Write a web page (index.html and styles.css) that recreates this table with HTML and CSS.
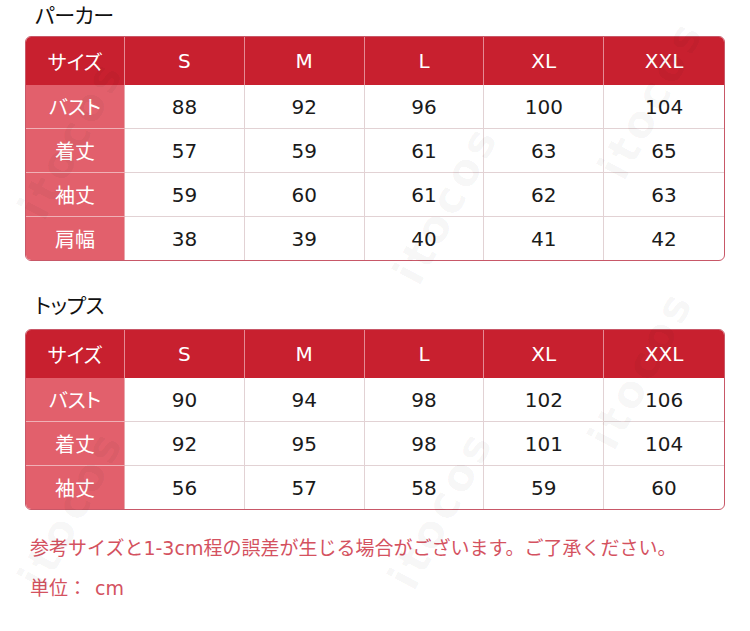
FILE: index.html
```html
<!DOCTYPE html>
<html lang="ja">
<head>
<meta charset="utf-8">
<link rel="stylesheet" href="styles.css">
</head>
<body>
<div class="page">
  <h2 class="title">パーカー</h2>
  <div class="table-wrap">
    <table class="size">
      <thead>
        <tr><th class="label">サイズ</th><th>S</th><th>M</th><th>L</th><th>XL</th><th>XXL</th></tr>
      </thead>
      <tbody>
        <tr><th class="label">バスト</th><td>88</td><td>92</td><td>96</td><td>100</td><td>104</td></tr>
        <tr><th class="label">着丈</th><td>57</td><td>59</td><td>61</td><td>63</td><td>65</td></tr>
        <tr><th class="label">袖丈</th><td>59</td><td>60</td><td>61</td><td>62</td><td>63</td></tr>
        <tr><th class="label">肩幅</th><td>38</td><td>39</td><td>40</td><td>41</td><td>42</td></tr>
      </tbody>
    </table>
  </div>

  <h2 class="title second">トップス</h2>
  <div class="table-wrap">
    <table class="size">
      <thead>
        <tr><th class="label">サイズ</th><th>S</th><th>M</th><th>L</th><th>XL</th><th>XXL</th></tr>
      </thead>
      <tbody>
        <tr><th class="label">バスト</th><td>90</td><td>94</td><td>98</td><td>102</td><td>106</td></tr>
        <tr><th class="label">着丈</th><td>92</td><td>95</td><td>98</td><td>101</td><td>104</td></tr>
        <tr><th class="label">袖丈</th><td>56</td><td>57</td><td>58</td><td>59</td><td>60</td></tr>
      </tbody>
    </table>
  </div>

  <p class="note">参考サイズと1-3cm程の誤差が生じる場合がございます。ご了承ください。</p>
  <p class="note unit">単位：<span class="unit-cm">cm</span></p>

  <div class="wm wm1">itocos</div>
  <div class="wm wm2">itocos</div>
  <div class="wm wm3">itocos</div>
  <div class="wm wm4">itocos</div>
  <div class="wm wm5">itocos</div>
  <div class="wm wm6">itocos</div>
</div>
</body>
</html>
```

FILE: styles.css
```css
html, body {
  margin: 0;
  padding: 0;
  background: #ffffff;
}
body {
  font-family: "DejaVu Sans", "Noto Sans CJK JP", sans-serif;
  color: #222222;
}
.page {
  position: relative;
  width: 750px;
  height: 631px;
  overflow: hidden;
  padding: 0 0 0 25px;
  box-sizing: border-box;
}
.title {
  margin: 0;
  padding: 0 0 0 10px;
  height: 36px;
  line-height: 28px;
  font-family: "Noto Sans CJK JP", sans-serif;
  font-feature-settings: "palt";
  font-weight: 400;
  font-size: 21px;
  letter-spacing: -0.5px;
  color: #111111;
}
.title.second {
  margin-top: 24px;
  height: 44px;
  line-height: 38px;
}
.table-wrap {
  width: 700px;
  box-sizing: border-box;
  border: 1px solid #c85868;
  border-radius: 6px;
  overflow: hidden;
}
.size {
  width: 100%;
  border-collapse: separate;
  border-spacing: 0;
  table-layout: fixed;
}
.size th, .size td {
  padding: 0;
  text-align: center;
  font-weight: 400;
  font-size: 20px;
  border-right: 1px solid #e2d2d4;
  border-bottom: 1px solid #e2d2d4;
}
.size tr > :last-child {
  border-right: none;
}
.size tbody tr:last-child > * {
  border-bottom: none;
}
.size thead th {
  height: 48px;
  background: #c8202f;
  color: #ffffff;
  border-right-color: #e58a94;
  border-bottom: none;
}
.size th.label {
  width: 98px;
  font-family: "Noto Sans CJK JP", sans-serif;
  font-feature-settings: "palt";
}
.size tbody th.label {
  background: #e2606c;
  color: #ffffff;
  border-right: 1px solid #e8a8ae;
  border-bottom-color: #f0b0b6;
}
.size tbody td {
  height: 43px;
  color: #1a1a1a;
}
.note {
  margin: 18px 0 0 5px;
  font-family: "DejaVu Sans", "Noto Sans CJK JP", sans-serif;
  font-size: 19px;
  line-height: 40px;
  color: #d4525f;
}
.note.unit {
  margin-top: 0;
}
.unit-cm {
  margin-left: 8px;
}
.wm {
  position: absolute;
  font-family: "DejaVu Sans", sans-serif;
  font-weight: 700;
  font-size: 44px;
  letter-spacing: 4px;
  color: rgba(0, 0, 0, 0.035);
  transform: rotate(-62deg);
  transform-origin: left center;
  pointer-events: none;
  white-space: nowrap;
}
.wm1 { left: 30px; top: 190px; }
.wm2 { left: 405px; top: 255px; }
.wm3 { left: 610px; top: 150px; }
.wm4 { left: 30px; top: 560px; }
.wm5 { left: 400px; top: 560px; }
.wm6 { left: 600px; top: 420px; }
```
